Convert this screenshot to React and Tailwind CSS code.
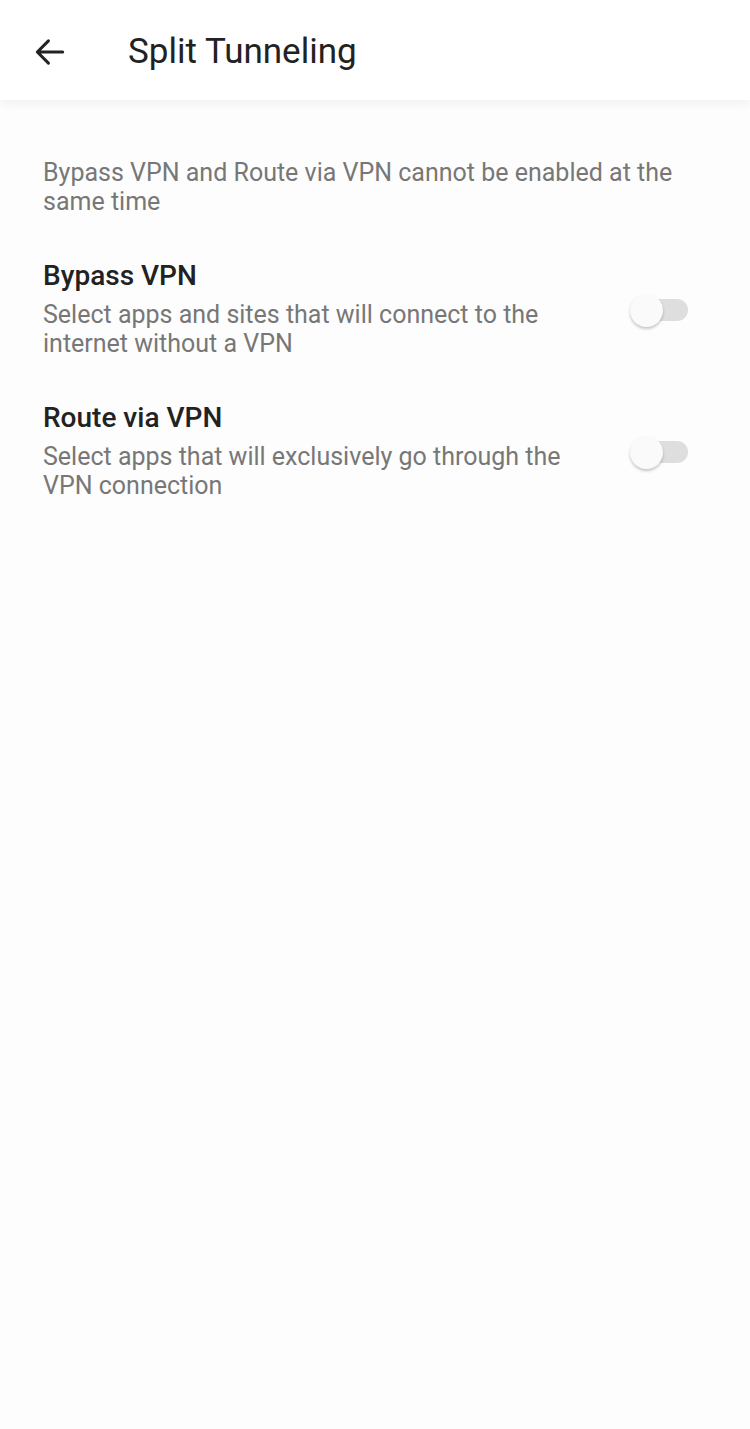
import React, { useState } from "react";

function Toggle({ on, onChange }) {
  return (
    <button
      onClick={() => onChange(!on)}
      className="relative w-[58px] h-[36px] shrink-0 flex items-center mt-[6px]"
    >
      <span className={"absolute left-[10px] right-0 h-[22px] rounded-full " + (on ? "bg-[#f6a9a2]" : "bg-[#dedede]")}></span>
      <span
        className={
          "absolute top-[2px] h-[33px] w-[33px] rounded-full shadow-[0_2px_3px_rgba(0,0,0,0.22)] " +
          (on ? "left-[25px] bg-[#e5483a]" : "left-0 bg-[#fafafa]")
        }
      ></span>
    </button>
  );
}

function Opcion({ titulo, texto, on, onChange }) {
  return (
    <div className="flex items-center justify-between gap-4">
      <div className="w-[550px]">
        <h3 className="text-[28px] leading-[40px] font-medium text-[#222]">{titulo}</h3>
        <p className="mt-[4px] text-[25px] leading-[29px] text-[#777]">{texto}</p>
      </div>
      <Toggle on={on} onChange={onChange} />
    </div>
  );
}

export default function App() {
  const [bypass, setBypass] = useState(false);
  const [route, setRoute] = useState(false);

  return (
    <div className="w-full min-h-[1429px] bg-[#fdfdfd] font-['Roboto',sans-serif]">
      <div className="h-[100px] bg-white flex items-center shadow-[0_4px_10px_rgba(0,0,0,0.05)]">
        <button className="w-[128px] h-full flex items-center pl-[31px] pt-[4px]">
          <svg width="38" height="38" viewBox="0 0 24 24" fill="none" stroke="#222" strokeWidth="1.9" strokeLinecap="round" strokeLinejoin="round">
            <path d="M20 12H4.5M11 5l-7 7 7 7" />
          </svg>
        </button>
        <h1 className="text-[35px] text-[#222] pt-[4px]">Split Tunneling</h1>
      </div>

      <div className="pl-[43px] pr-[62px] pt-[58px] flex flex-col gap-[40px]">
        <p className="text-[25px] leading-[29px] text-[#777]">
          Bypass VPN and Route via VPN cannot be enabled at the same time
        </p>
        <Opcion
          titulo="Bypass VPN"
          texto="Select apps and sites that will connect to the internet without a VPN"
          on={bypass}
          onChange={(v) => { setBypass(v); if (v) setRoute(false); }}
        />
        <Opcion
          titulo="Route via VPN"
          texto="Select apps that will exclusively go through the VPN connection"
          on={route}
          onChange={(v) => { setRoute(v); if (v) setBypass(false); }}
        />
      </div>
    </div>
  );
}
